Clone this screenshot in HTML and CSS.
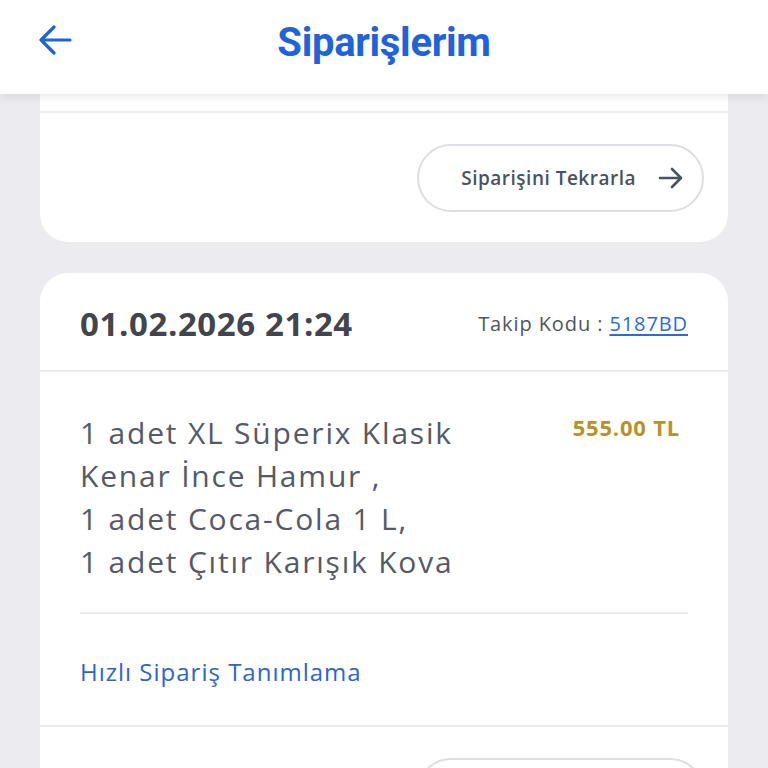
FILE: index.html
```html
<!DOCTYPE html>
<html lang="tr">
<head>
<meta charset="utf-8">
<title>Siparişlerim</title>
<link rel="stylesheet" href="styles.css">
</head>
<body>
<header class="topbar">
  <button class="back" aria-label="Geri">
    <svg width="34" height="30" viewBox="0 0 34 30"><path d="M32 15H3M16 2L3 15l13 13" fill="none" stroke="#1f63dc" stroke-width="3.2" stroke-linecap="round" stroke-linejoin="round"/></svg>
  </button>
  <h1 class="title">Siparişlerim</h1>
</header>
<main class="list">
  <section class="card card-cut">
    <div class="card-top"></div>
    <div class="repeat-row">
      <button class="repeat">Siparişini Tekrarla
        <svg width="26" height="22" viewBox="0 0 26 22"><path d="M2 11h21M14 2l9 9-9 9" fill="none" stroke="#4a5260" stroke-width="2.6" stroke-linecap="round" stroke-linejoin="round"/></svg>
      </button>
    </div>
  </section>
  <section class="card">
    <div class="order-head">
      <span class="date">01.02.2026 21:24</span>
      <span class="track">Takip Kodu : <a href="#" class="code">5187BD</a></span>
    </div>
    <div class="order-body">
      <div class="items-row">
        <p class="items">1 adet XL Süperix Klasik<br>Kenar İnce Hamur ,<br>1 adet Coca-Cola 1 L,<br>1 adet Çıtır Karışık Kova</p>
        <span class="price">555.00 TL</span>
      </div>
      <div class="quick"><a href="#" class="quick-link">Hızlı Sipariş Tanımlama</a></div>
    </div>
    <div class="repeat-row next">
      <button class="repeat">Siparişini Tekrarla
        <svg width="26" height="22" viewBox="0 0 26 22"><path d="M2 11h21M14 2l9 9-9 9" fill="none" stroke="#4a5260" stroke-width="2.6" stroke-linecap="round" stroke-linejoin="round"/></svg>
      </button>
    </div>
  </section>
</main>
</body>
</html>
```
FILE: styles.css
```css
* { box-sizing: border-box; }
html, body { margin: 0; padding: 0; }
body {
  background: #ebebf0;
  font-family: "Open Sans", Lato, sans-serif;
  height: 768px;
  overflow: hidden;
}
.topbar {
  position: relative;
  z-index: 2;
  height: 94px;
  background: #fff;
  display: flex;
  align-items: center;
  justify-content: center;
  box-shadow: 0 2px 10px rgba(0,0,0,0.10);
}
.back {
  position: absolute;
  left: 38px;
  top: 25px;
  background: none;
  border: 0;
  padding: 0;
  line-height: 0;
}
.title {
  margin: 0;
  font-family: Roboto, sans-serif;
  font-weight: 700;
  font-size: 40px;
  color: #1f63dc;
  letter-spacing: -0.3px;
  transform: translateY(-5px);
}
.list {
  padding: 0 40px;
  display: flex;
  flex-direction: column;
  gap: 31px;
}
.card {
  background: #fff;
  border-radius: 28px;
}
.card-cut {
  margin-top: -40px;
}
.card-top {
  height: 59px;
  border-bottom: 2px solid #ececef;
}
.repeat-row {
  display: flex;
  justify-content: flex-end;
  padding: 31px 24px 30px;
}
.repeat {
  height: 68px;
  width: 287px;
  border: 2px solid #dedee2;
  border-radius: 34px;
  background: #fff;
  font-family: "Open Sans", sans-serif;
  font-size: 19px;
  font-weight: 600;
  letter-spacing: 0.5px;
  color: #4a5260;
  display: flex;
  align-items: center;
  justify-content: flex-end;
  gap: 22px;
  padding: 0 18px 0 0;
}
.order-head {
  height: 99px;
  display: flex;
  align-items: center;
  justify-content: space-between;
  padding: 4px 40px 0;
  border-bottom: 2px solid #ececef;
}
.date {
  font-size: 33px;
  font-weight: 700;
  color: #43454d;
  letter-spacing: 0.6px;
}
.track {
  font-size: 20px;
  color: #4f5560;
  letter-spacing: 0.9px;
}
.code {
  color: #2c6bd6;
  text-decoration: underline;
  text-underline-offset: 3px;
}
.order-body {
  padding: 0 40px;
  border-bottom: 2px solid #ececef;
}
.items-row {
  display: flex;
  justify-content: space-between;
  align-items: flex-start;
  padding: 39px 0 29px;
  border-bottom: 2px solid #ececef;
}
.items {
  margin: 0;
  font-size: 30px;
  line-height: 43px;
  color: #555a66;
  letter-spacing: 1.8px;
}
.price {
  font-size: 22px;
  font-weight: 700;
  color: #b8912b;
  letter-spacing: 0.8px;
  padding-top: 1px;
  margin-right: 8px;
}
.quick {
  height: 111px;
  display: flex;
  align-items: center;
  padding-top: 3px;
}
.quick-link {
  font-size: 24px;
  color: #2c66c9;
  text-decoration: none;
  letter-spacing: 1px;
}
.next {
  padding-top: 31px;
}
```
